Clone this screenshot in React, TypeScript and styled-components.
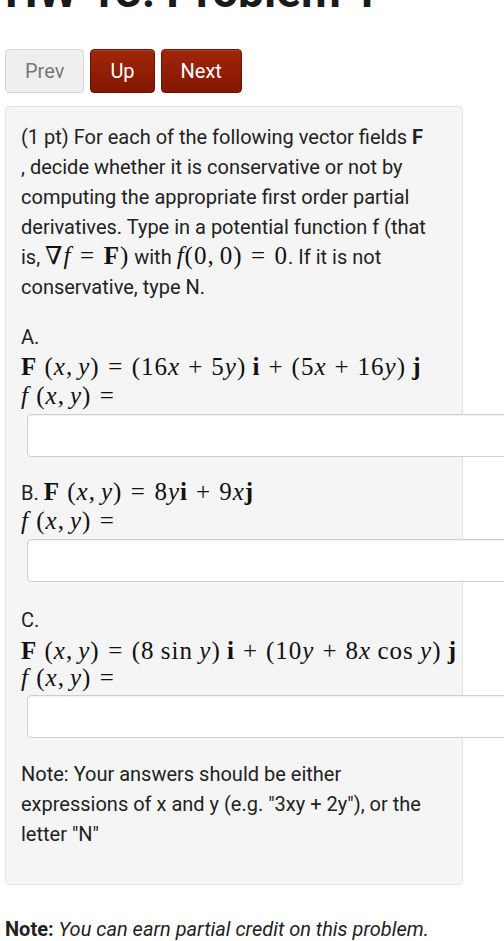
import React from "react";
import styled, { createGlobalStyle } from "styled-components";

const Global = createGlobalStyle`
  html, body { margin: 0; padding: 0; background: #fff; overflow-x: hidden; }
  body { font-family: Roboto, "Noto Sans", Arial, sans-serif; color: #222; }
`;

const Page = styled.div`
  padding: 0 0 20px 5px;
  overflow-x: hidden;
`;

const Title = styled.h1`
  margin: -34px 0 0 0;
  font-size: 46px;
  line-height: 50px;
  font-weight: 700;
  color: #1a1a1a;
  white-space: nowrap;
`;

const Nav = styled.div`
  display: flex;
  gap: 6px;
  margin-top: 33px;
`;

const NavButton = styled.button<{ $primary?: boolean }>`
  height: 44px;
  padding: 0 19px;
  font-family: Roboto, sans-serif;
  font-size: 20px;
  border-radius: 4px;
  border: 1px solid ${(p) => (p.$primary ? "#6a1100" : "#d6d6d6")};
  color: ${(p) => (p.$primary ? "#fff" : "#777")};
  background: ${(p) =>
    p.$primary ? "linear-gradient(#a0260a, #841700)" : "#efefef"};
  box-shadow: ${(p) =>
    p.$primary ? "inset 0 1px 0 rgba(255,255,255,0.15)" : "none"};
`;

const Problem = styled.div`
  box-sizing: border-box;
  width: 458px;
  margin-top: 13px;
  padding: 15px 15px 35px;
  background: #f5f5f5;
  border: 1px solid #e3e3e3;
  border-radius: 4px;
  font-size: 20px;
  line-height: 30px;
  color: #222;
`;

const Para = styled.p<{ $top?: number }>`
  margin: ${(p) => p.$top ?? 0}px 0 0 0;
`;

const Part = styled.div<{ $top: number }>`
  margin-top: ${(p) => p.$top}px;
`;

const Line = styled.div<{ $h?: number }>`
  height: ${(p) => p.$h ?? 30}px;
  line-height: ${(p) => p.$h ?? 30}px;
  white-space: nowrap;
`;

const M = styled.span`
  font-family: "Liberation Serif", "DejaVu Serif", serif;
  font-size: 25px;
  line-height: 0;
  letter-spacing: 0.04em;
  color: #111;
`;

const V = styled.span`
  font-style: italic;
`;

const Bf = styled.span`
  font-weight: 700;
`;

const Rel = styled.span`
  margin: 0 0.34em;
`;

const Bin = styled.span`
  margin: 0 0.32em;
`;

const Thin = styled.span`
  margin-right: 0.2em;
`;

const Sp = styled.span<{ $w?: number }>`
  display: inline-block;
  width: ${(p) => p.$w ?? 0.25}em;
`;

const Answer = styled.input<{ $top: number }>`
  display: block;
  box-sizing: border-box;
  width: 530px;
  height: 43px;
  margin: ${(p) => p.$top}px 0 0 6px;
  padding: 0 10px;
  background: #fff;
  border: 1px solid #cfcfcf;
  border-radius: 4px;
  box-shadow: inset 0 1px 1px rgba(0, 0, 0, 0.06);
  font-size: 18px;
  outline: none;
`;

const Footer = styled.p`
  margin: 29px 0 0 0;
  font-size: 20px;
  line-height: 30px;
  color: #222;
  white-space: nowrap;
`;

const Em = styled.em`
  font-style: italic;
`;

const Args = () => (
  <>
    (<V>x</V>
    <Thin>,</Thin>
    <V>y</V>)
  </>
);

const FofXY = () => (
  <M>
    <V>f</V> <Args />
    <Rel>=</Rel>
  </M>
);

export default function App() {
  return (
    <Page>
      <Global />
      <Title>HW 13: Problem 1</Title>
      <Nav>
        <NavButton>Prev</NavButton>
        <NavButton $primary>Up</NavButton>
        <NavButton $primary>Next</NavButton>
      </Nav>
      <Problem>
        <Para>
          (1 pt) For each of the following vector fields <b>F</b>
          <br />, decide whether it is conservative or not by computing the
          appropriate first order partial derivatives. Type in a potential
          function f (that is,{" "}
          <M>
            ∇<V>f</V>
            <Rel>=</Rel>
            <Bf>F</Bf>)
          </M>{" "}
          with{" "}
          <M>
            <V>f</V>(0<Thin>,</Thin>0)<Rel>=</Rel>0
          </M>
          . If it is not conservative, type N.
        </Para>

        <Part $top={20}>
          <Line>A.</Line>
          <Line $h={32}>
            <M>
              <Bf>F</Bf> <Args />
              <Rel>=</Rel>(16<V>x</V>
              <Bin>+</Bin>5<V>y</V>)<Sp />
              <Bf>i</Bf>
              <Bin>+</Bin>(5<V>x</V>
              <Bin>+</Bin>16<V>y</V>)<Sp />
              <Bf>j</Bf>
            </M>
          </Line>
          <Line $h={26}>
            <FofXY />
          </Line>
          <Answer aria-label="answer A" $top={4} />
        </Part>

        <Part $top={21}>
          <Line>
            B.{" "}
            <M>
              <Bf>F</Bf> <Args />
              <Rel>=</Rel>8<V>y</V>
              <Bf>i</Bf>
              <Bin>+</Bin>9<V>x</V>
              <Bf>j</Bf>
            </M>
          </Line>
          <Line $h={28}>
            <FofXY />
          </Line>
          <Answer aria-label="answer B" $top={3} />
        </Part>

        <Part $top={23}>
          <Line>C.</Line>
          <Line $h={34}>
            <M>
              <Bf>F</Bf> <Args />
              <Rel>=</Rel>(8<Sp />
              sin
              <Sp />
              <V>y</V>)<Sp />
              <Bf>i</Bf>
              <Bin>+</Bin>(10<V>y</V>
              <Bin>+</Bin>8<V>x</V>
              <Sp />
              cos
              <Sp />
              <V>y</V>)<Sp />
              <Bf>j</Bf>
            </M>
          </Line>
          <Line $h={20}>
            <FofXY />
          </Line>
          <Answer aria-label="answer C" $top={6} />
        </Part>

        <Para $top={21}>
          Note: Your answers should be either expressions of x and y (e.g.
          "3xy + 2y"), or the letter "N"
        </Para>
      </Problem>
      <Footer>
        <b>Note:</b> <Em>You can earn partial credit on this problem.</Em>
      </Footer>
    </Page>
  );
}
